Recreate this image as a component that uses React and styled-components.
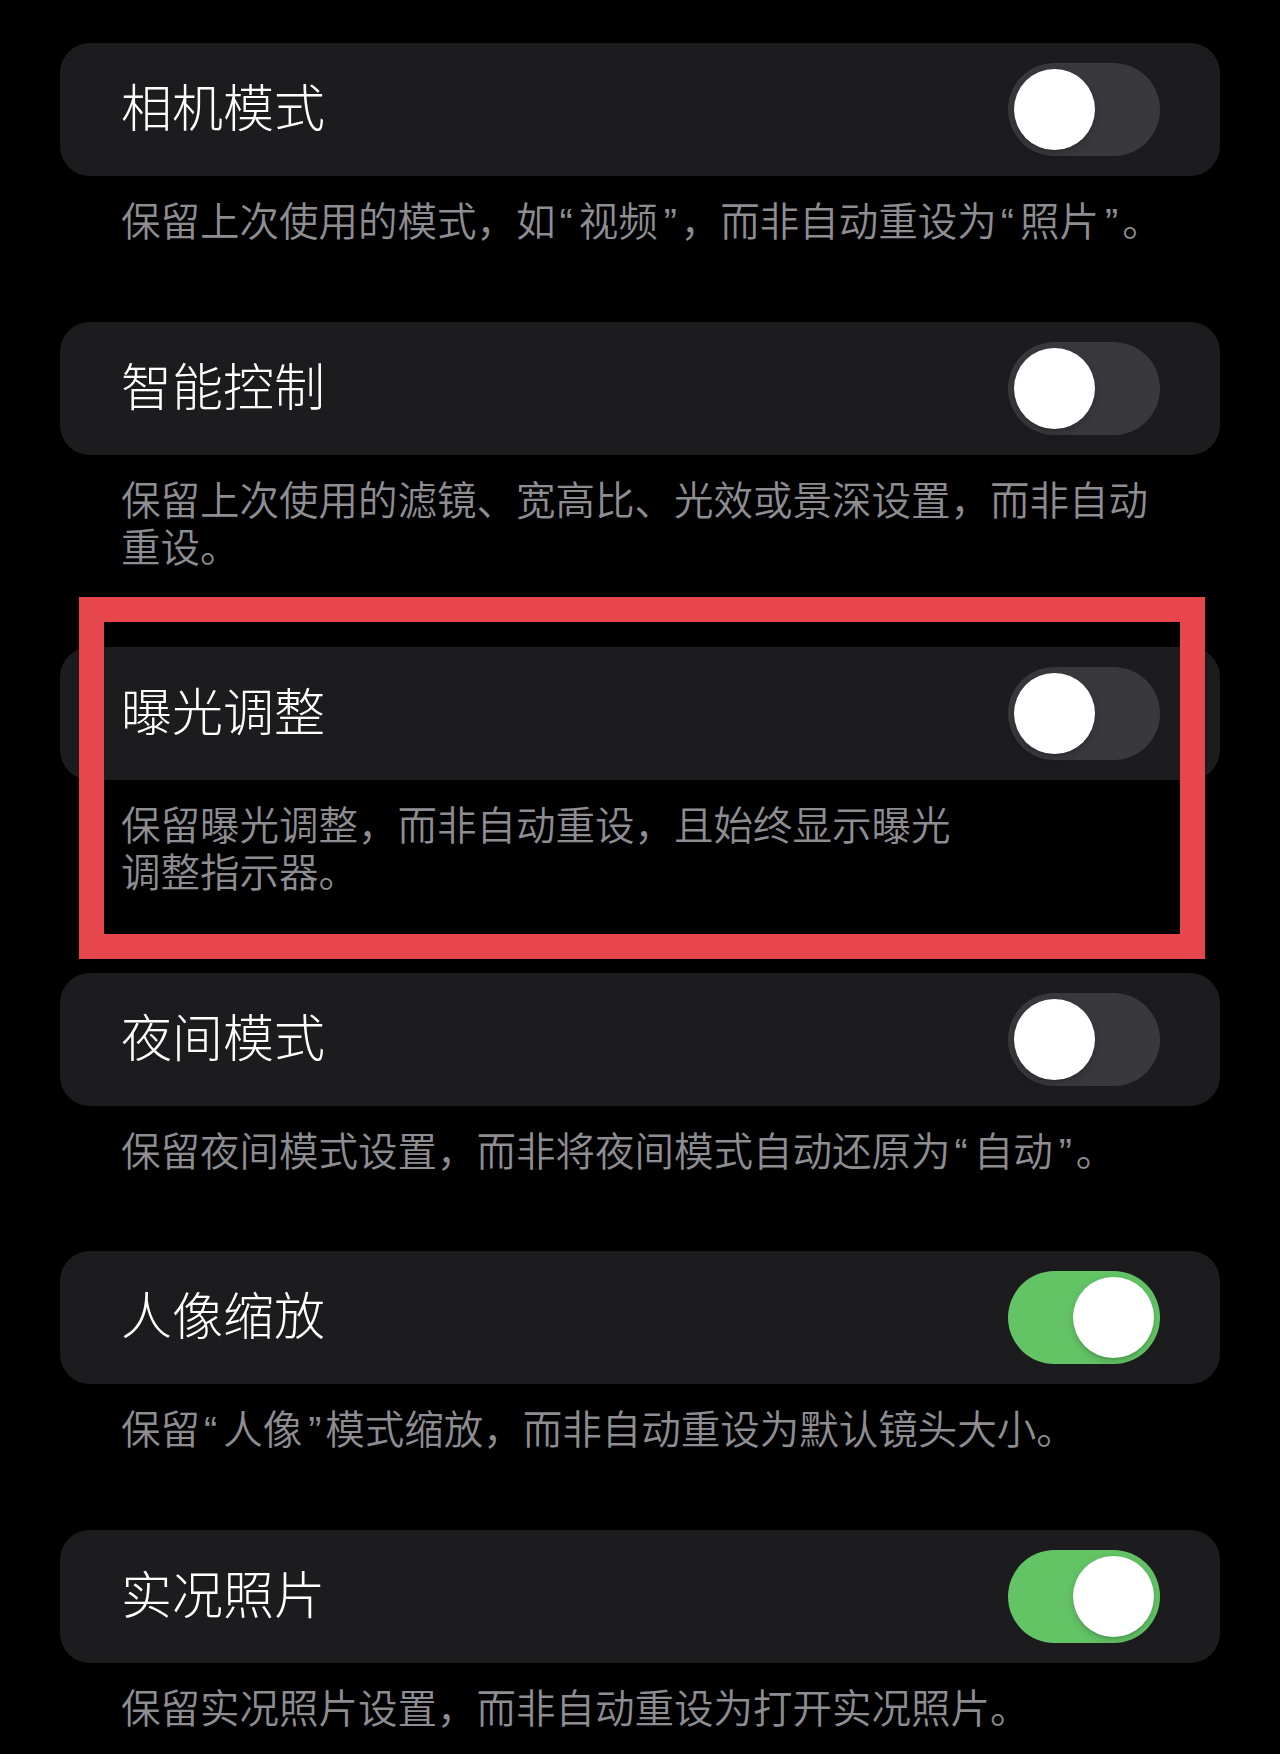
import styled, { createGlobalStyle } from "styled-components";

const GlobalStyle = createGlobalStyle`
  html, body {
    margin: 0;
    padding: 0;
    background: #000;
  }
  body {
    font-family: "Liberation Sans", "Noto Sans CJK SC", sans-serif;
    -webkit-font-smoothing: antialiased;
  }
`;

const settings = [
  {
    title: "相机模式",
    note: "保留上次使用的模式，如“视频”，而非自动重设为“照片”。",
    on: false,
  },
  {
    title: "智能控制",
    note: "保留上次使用的滤镜、宽高比、光效或景深设置，而非自动\n重设。",
    on: false,
  },
  {
    title: "曝光调整",
    note: "保留曝光调整，而非自动重设，且始终显示曝光\n调整指示器。",
    on: false,
    marked: true,
  },
  {
    title: "夜间模式",
    note: "保留夜间模式设置，而非将夜间模式自动还原为“自动”。",
    on: false,
  },
  {
    title: "人像缩放",
    note: "保留“人像”模式缩放，而非自动重设为默认镜头大小。",
    on: true,
  },
  {
    title: "实况照片",
    note: "保留实况照片设置，而非自动重设为打开实况照片。",
    on: true,
  },
];

const Page = styled.div`
  padding: 43px 60px 0;
  display: flex;
  flex-direction: column;
`;

const Section = styled.section`
  position: relative;
  display: flex;
  flex-direction: column;
`;

const Card = styled.div`
  height: 133px;
  box-sizing: border-box;
  padding: 0 60px 0 61px;
  border-radius: 30px;
  background: #1c1c1e;
  display: flex;
  align-items: center;
  justify-content: space-between;
`;

const Title = styled.span`
  font-size: 51px;
  line-height: 1;
  color: #fff;
  font-weight: 300;
`;

const Note = styled.p`
  margin: 0;
  padding: 23px 40px 75.5px 61px;
  font-size: 39.5px;
  line-height: 47px;
  color: #8d8d92;
  font-weight: 350;
  white-space: pre;
`;

// curly quotes get a bit more room, mostly on the side facing the quoted words
const Quote = styled.span`
  padding: ${({ $open }) => ($open ? "0 6px 0 4px" : "0 4px 0 6px")};
`;

const Track = styled.div`
  width: 152px;
  height: 93px;
  border-radius: 47px;
  background: ${({ $on }) => ($on ? "#63c466" : "#39393d")};
  display: flex;
  align-items: center;
  justify-content: ${({ $on }) => ($on ? "flex-end" : "flex-start")};
  padding: 0 6px;
  box-sizing: border-box;
`;

const Knob = styled.div`
  width: 81px;
  height: 81px;
  border-radius: 50%;
  background: #fff;
  box-shadow: 0 3px 8px rgba(0, 0, 0, 0.18), 0 2px 1px rgba(0, 0, 0, 0.08);
`;

// red annotation frame laid over one section
const Highlight = styled.div`
  position: absolute;
  top: -50px;
  left: 19px;
  width: 1126px;
  height: 362px;
  box-sizing: border-box;
  border: 25px solid #e8464d;
  pointer-events: none;
`;

const Toggle = ({ on }) => (
  <Track $on={on}>
    <Knob />
  </Track>
);

const NoteText = ({ text }) => (
  <Note>
    {text.split(/([“”])/).map((part, i) =>
      part === "“" || part === "”" ? (
        <Quote key={i} $open={part === "“"}>
          {part}
        </Quote>
      ) : (
        part
      )
    )}
  </Note>
);

const App = () => (
  <>
    <GlobalStyle />
    <Page>
      {settings.map((s) => (
        <Section key={s.title}>
          <Card>
            <Title>{s.title}</Title>
            <Toggle on={s.on} />
          </Card>
          <NoteText text={s.note} />
          {s.marked && <Highlight />}
        </Section>
      ))}
    </Page>
  </>
);

export default App;
